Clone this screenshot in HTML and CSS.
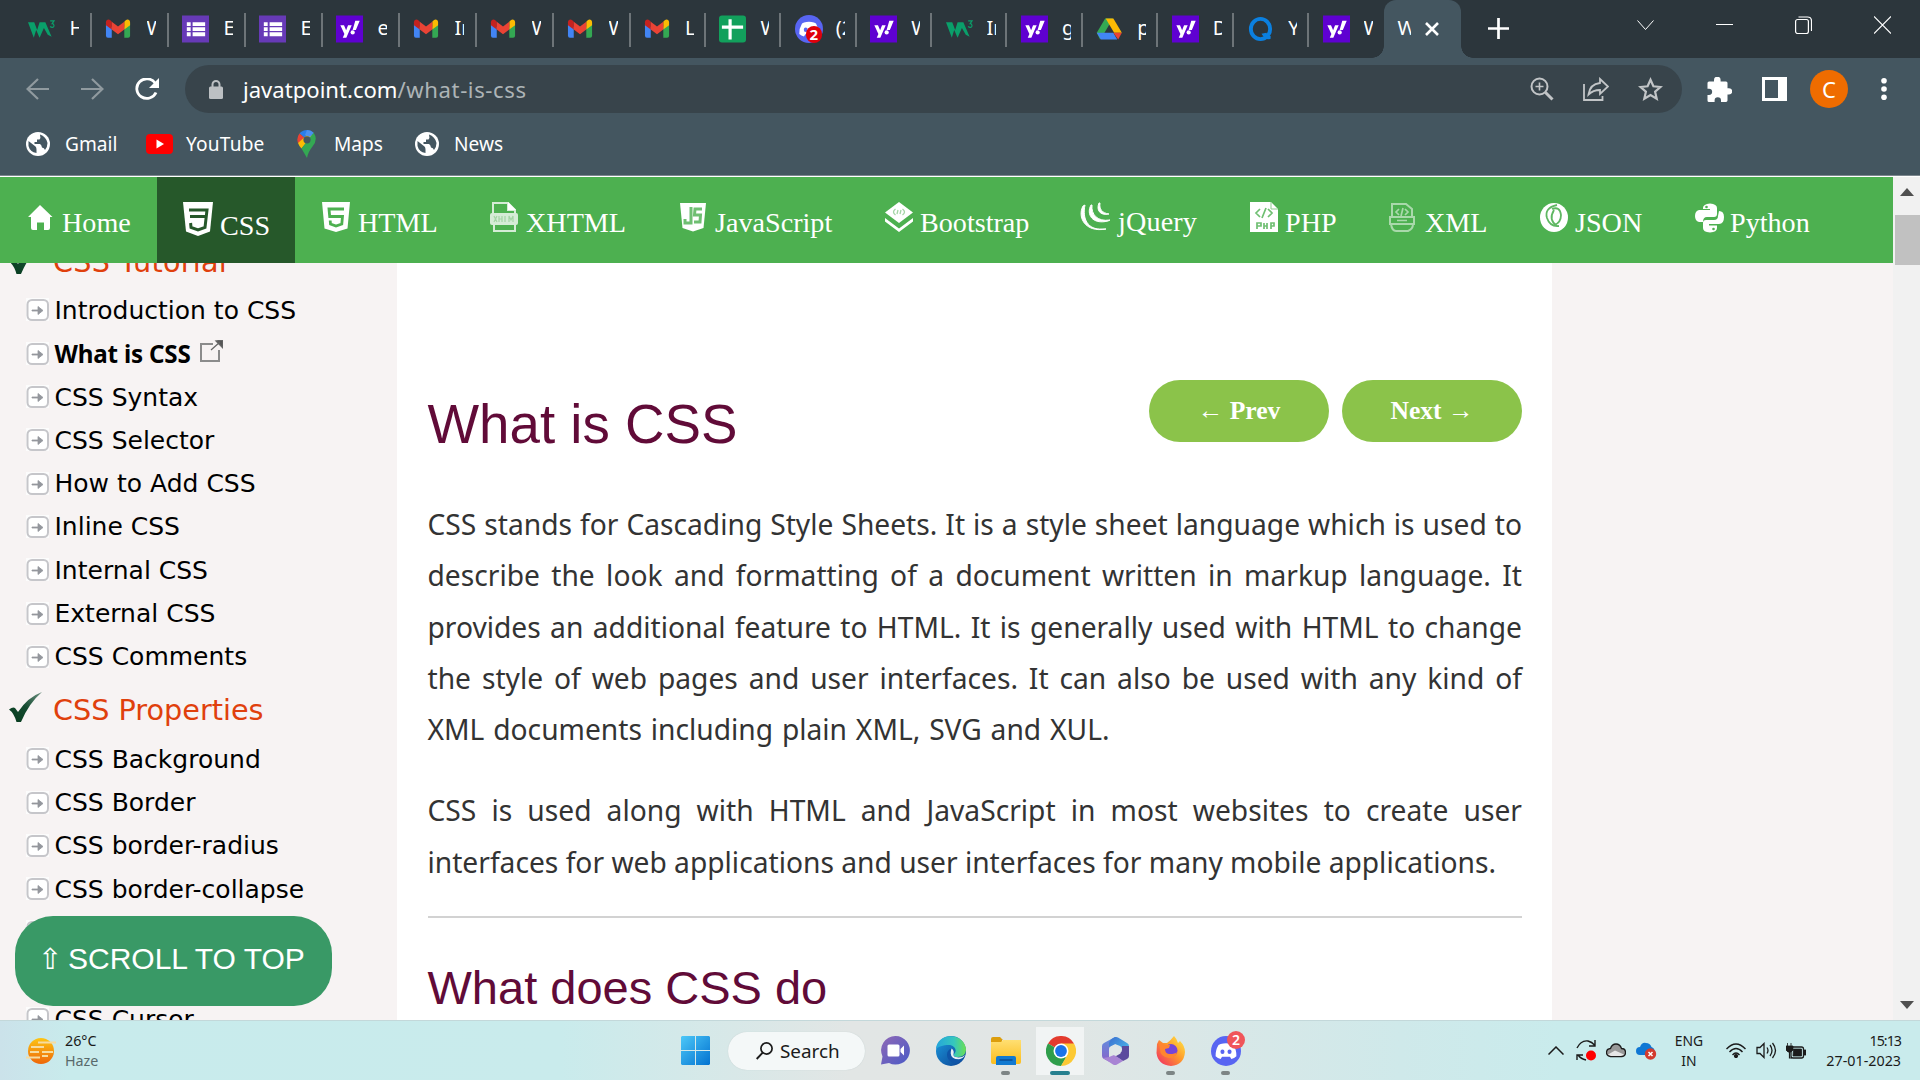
FILE: index.html
```
<!DOCTYPE html>
<html lang="en">
<head>
<meta charset="utf-8">
<title>What is CSS</title>
<link rel="stylesheet" href="styles.css">
</head>
<body>
<svg class="defs" aria-hidden="true">
  <defs>
    <linearGradient id="gWin" x1="0" y1="0" x2="1" y2="1"><stop offset="0" stop-color="#4cc8f8"/><stop offset="1" stop-color="#0272d0"/></linearGradient>
    <linearGradient id="gChat" x1="0" y1="0" x2="1" y2="1"><stop offset="0" stop-color="#9069b6"/><stop offset="1" stop-color="#4a5ac6"/></linearGradient>
    <linearGradient id="gEdgeTop" x1="0" y1="0" x2="1" y2="0"><stop offset="0" stop-color="#25a5dc"/><stop offset=".6" stop-color="#35c7bd"/><stop offset="1" stop-color="#6be052"/></linearGradient>
    <linearGradient id="gEdge" x1="0" y1="0" x2="1" y2="1"><stop offset="0" stop-color="#1c9bde"/><stop offset="1" stop-color="#0b3f92"/></linearGradient>
    <linearGradient id="gFold" x1="0" y1="0" x2="0" y2="1"><stop offset="0" stop-color="#ffdf72"/><stop offset="1" stop-color="#fbbd1d"/></linearGradient>
    <linearGradient id="gSun" x1="0" y1="0" x2="0" y2="1"><stop offset="0" stop-color="#fdc514"/><stop offset="1" stop-color="#ee6609"/></linearGradient>
    <linearGradient id="gFox" x1="1" y1="0" x2="0" y2="1"><stop offset="0" stop-color="#fff04a"/><stop offset=".45" stop-color="#ff9a2b"/><stop offset="1" stop-color="#f0246a"/></linearGradient>
    <linearGradient id="gCheck" x1="1" y1="0" x2="0" y2="1"><stop offset="0" stop-color="#6f9182"/><stop offset=".5" stop-color="#144b30"/><stop offset="1" stop-color="#053a1c"/></linearGradient>
    <linearGradient id="gM1" x1="0" y1="0" x2="0" y2="1"><stop offset="0" stop-color="#5f8fe0"/><stop offset="1" stop-color="#8a63c8"/></linearGradient>
    <linearGradient id="gM2" x1="0" y1="0" x2="1" y2="1"><stop offset="0" stop-color="#3b6fd0"/><stop offset="1" stop-color="#4cc4ef"/></linearGradient>
  </defs>
  <symbol id="w3" viewBox="0 0 28 28"><path d="M0 7h6.500l3 8 2.500-8h6l6.500 15-4-2-4-7-4.500 10-3.500-8-2.500 8z" fill="#0a9f6a"/><path d="M23 5.500h4l-2 3c2.500 0 2.500 3.500.5 3.800-1.200.1-2-.3-2.500-1" fill="none" stroke="#0a9f6a" stroke-width="1.200"/></symbol>
  <symbol id="gmail" viewBox="0 0 28 28"><path d="M1 9v12q0 2 2 2h4V12z" fill="#4285f4"/><path d="M20 12v11h4q2 0 2-2V8z" fill="#34a853"/><path d="M20 6.500v8l6-4.500V7c0-3-3-3.500-4.500-2z" fill="#fbbc04"/><path d="M7 14.500v-8L5.500 5C4 3.500 1 4 1 7v3z" fill="#c5221f"/><path d="M7 6.500l6.500 5 6.500-5v8l-6.500 5-6.500-5z" fill="#ea4335"/></symbol>
  <symbol id="forms" viewBox="0 0 28 28"><path d="M0 0h28v28H0z" fill="#673ab7"/><path d="M5 7h4v4H5zM11 7h13v4H11zM5 12.200h4v4H5zM11 12.200h13v4H11zM5 17.400h4v4H5zM11 17.400h13v4H11z" fill="#fff"/></symbol>
  <symbol id="yahoo" viewBox="0 0 28 28"><path d="M0 0h28v28H0z" fill="#5f01d1"/><path d="M4.500 10H8.300l2.200 5.200L12.500 10h3.800l-5.600 13.200H7l1.700-4z M20 5.500h4.600l-4 9.500h-3.400z" fill="#fff"/><circle cx="17.300" cy="17.500" r="2.200" fill="#fff"/></symbol>
  <symbol id="sheets" viewBox="0 0 28 28"><rect width="28" height="28" rx="3" fill="#12a05c"/><path d="M11.500 4v21M3 12h22" stroke="#fff" stroke-width="3.300"/></symbol>
  <symbol id="face" viewBox="0 0 28 28"><path d="M9 7.500q5-1.500 10 0l2 1q3 5 2.700 10.500-2 1.800-4.700 2.500l-1.300-2.200H10.300L9 21.500q-2.700-.7-4.700-2.500Q4 13.500 7 8.500z" fill="#fff"/><ellipse cx="10.700" cy="14.700" rx="1.900" ry="2.200" fill="#5865f2"/><ellipse cx="17.300" cy="14.700" rx="1.900" ry="2.200" fill="#5865f2"/></symbol>
  <symbol id="drive" viewBox="0 0 28 28"><path d="M9.500 3h8l-9 15.500-4.300 6.500L.8 18z" fill="#34a853"/><path d="M10 3h8l8.800 15h-8z" fill="#fbb904"/><path d="M8.800 18H.8L5 25h17l-4-7z" fill="#4285f4"/><path d="M18 18h8.800L23 25z" fill="#ea4335"/></symbol>
  <symbol id="quora" viewBox="0 0 28 28"><ellipse cx="14" cy="14" rx="10" ry="10.500" fill="none" stroke="#0b80e0" stroke-width="4"/><path d="M15 19l5-1q2 4 4.500 3v3q-5 2-8-3z" fill="#0b80e0"/></symbol>
  <symbol id="globe" viewBox="0 0 24 24"><circle cx="12" cy="12" r="12" fill="#fff"/><path d="M2.500 9l7 5.500q1 .8 1 3v3.500Q4 20 2.500 14zM14 2.500Q20 4.500 21.500 11q0 4-2.500 7-.8-2.500-3-2.500-.5-3-2-3.500H8.500V10H11V7.500h2.500Q15 6 14 2.500z" fill="#445660"/></symbol>
  <symbol id="item" viewBox="0 0 23 23"><path d="M0 0h23v23H0z" fill="#fcfcfc"/><rect x="1.500" y="2" width="20.500" height="20" rx="4.500" fill="#fff" stroke="#c6c6ca" stroke-width="2"/><path d="M6 12h6V8.500l5 4-5 4V13H6z" fill="#94979d" stroke="#94979d" stroke-width=".8"/></symbol>
  <symbol id="check" viewBox="0 0 34 31"><path d="M0 17.500q4-3 6-1.500l3 4Q19 5 33 0 20 11 12 30H7.500Q5 21 0 17.500z" fill="url(#gCheck)"/></symbol>
</svg>

<header class="tabs">
  <div class="tab"><svg class="fav"><use href="#w3"/></svg><span>H</span></div>
  <div class="tab"><svg class="fav"><use href="#gmail"/></svg><span>W</span></div>
  <div class="tab"><svg class="fav"><use href="#forms"/></svg><span>E</span></div>
  <div class="tab"><svg class="fav"><use href="#forms"/></svg><span>E</span></div>
  <div class="tab"><svg class="fav"><use href="#yahoo"/></svg><span>e</span></div>
  <div class="tab"><svg class="fav"><use href="#gmail"/></svg><span>In</span></div>
  <div class="tab"><svg class="fav"><use href="#gmail"/></svg><span>W</span></div>
  <div class="tab"><svg class="fav"><use href="#gmail"/></svg><span>W</span></div>
  <div class="tab"><svg class="fav"><use href="#gmail"/></svg><span>L</span></div>
  <div class="tab"><svg class="fav"><use href="#sheets"/></svg><span>W</span></div>
  <div class="tab"><div class="fav disc"><svg class="disc-bg" viewBox="0 0 28 28"><circle cx="14" cy="14" r="14" fill="#5865f2"/><use href="#face"/></svg><b class="disc-n">2</b></div><span>(2</span></div>
  <div class="tab"><svg class="fav"><use href="#yahoo"/></svg><span>W</span></div>
  <div class="tab"><svg class="fav"><use href="#w3"/></svg><span>In</span></div>
  <div class="tab"><svg class="fav"><use href="#yahoo"/></svg><span>g</span></div>
  <div class="tab"><svg class="fav"><use href="#drive"/></svg><span>p</span></div>
  <div class="tab"><svg class="fav"><use href="#yahoo"/></svg><span>D</span></div>
  <div class="tab"><svg class="fav"><use href="#quora"/></svg><span>Y</span></div>
  <div class="tab last"><svg class="fav"><use href="#yahoo"/></svg><span>W</span></div>
  <div class="tab active"><span>W</span><svg width="14" height="14" viewBox="0 0 14 14"><path d="M1 1l12 12M13 1L1 13" stroke="#fff" stroke-width="2.600"/></svg></div>
  <svg class="plus" width="21" height="21" viewBox="0 0 21 21"><path d="M10.500 0v21M0 10.500h21" stroke="#fff" stroke-width="2.700"/></svg>
  <div class="win">
    <svg width="17" height="18" viewBox="0 0 17 18"><path d="M.5 4.500l8 9 8-9" fill="none" stroke="#fff"/></svg>
    <svg width="17" height="18" viewBox="0 0 17 18"><path d="M0 8.500h17" stroke="#fff" stroke-width="1"/></svg>
    <svg width="17" height="18" viewBox="0 0 17 18"><rect x=".6" y="3.500" width="12.800" height="14" rx="2" fill="none" stroke="#fff" stroke-width="1.200"/><path d="M3.500 1h9q4 0 4 4v10" fill="none" stroke="#fff" stroke-width="1.200"/></svg>
    <svg width="17" height="18" viewBox="0 0 17 18"><path d="M0 .5l17 17M17 .5l-17 17" stroke="#fff" stroke-width="1.200"/></svg>
  </div>
</header>

<div class="toolbar">
  <svg class="back" width="23" height="22" viewBox="0 0 23 22"><path d="M23 11H1.500M12 1L1.500 11 12 21" fill="none" stroke="#909a9f" stroke-width="2.200"/></svg>
  <svg class="fwd" width="23" height="22" viewBox="0 0 23 22"><path d="M0 11h21.500M11 1l10.500 10L11 21" fill="none" stroke="#909a9f" stroke-width="2.200"/></svg>
  <svg class="reload" width="24" height="22" viewBox="0 0 24 22"><path d="M20 5A10 9.800 0 1 0 21 14.500" fill="none" stroke="#fff" stroke-width="2.800"/><path d="M24 0v10h-10z" fill="#fff"/></svg>
  <div class="omni">
    <svg width="14" height="19" viewBox="0 0 14 19"><rect y="6.500" width="14" height="12.500" rx="1.500" fill="#bcc0c3"/><path d="M3.500 7V4.500a3.500 3.500 0 0 1 7 0V7" fill="none" stroke="#bcc0c3" stroke-width="2"/></svg>
    <div class="url"><span class="host">javatpoint.com</span><span class="path">/what-is-css</span></div>
    <div class="omni-icons">
      <svg width="24" height="24" viewBox="0 0 24 24" fill="none" stroke="#c2c5c7" stroke-width="2"><circle cx="9.500" cy="9.500" r="8"/><path d="M5.500 9.500h8M9.500 5.500v8" stroke-width="1.600"/><path d="M15.500 15.500l7 7" stroke-width="3"/></svg>
      <svg width="26" height="24" viewBox="0 0 26 24" fill="none" stroke="#c2c5c7" stroke-width="1.800"><path d="M1 7v16h18.500v-4"/><path d="M17 2l8 7.500-8 7.500v-4q-7 0-11.500 4.500Q7 7 17 6z"/></svg>
      <svg width="25" height="24" viewBox="0 0 25 24"><path d="M12.500 2.800l2.900 6.500 7 .7-5.300 4.700 1.600 7-6.200-3.700-6.200 3.700 1.600-7L2.600 10l7-.7z" fill="none" stroke="#c2c5c7" stroke-width="2.200"/></svg>
    </div>
  </div>
  <div class="ext">
    <svg width="25" height="25" viewBox="0 0 25 25"><path d="M2 4.500h5V3a3.300 3.300 0 0 1 6.600 0v1.500H19a1.500 1.500 0 0 1 1.500 1.500v5.200H22a3.200 3.200 0 0 1 0 6.400h-1.500v6A1.500 1.500 0 0 1 19 25h-5v-1.500a3.200 3.200 0 0 0-6.400 0V25H2a1.500 1.500 0 0 1-1.500-1.500V18H2a3 3 0 0 0 0-6.300H.5V6A1.500 1.500 0 0 1 2 4.500z" fill="#fff"/></svg>
    <svg width="25" height="24" viewBox="0 0 25 24"><path d="M1.500 1.500h22v21h-22z" fill="none" stroke="#fff" stroke-width="3"/><path d="M16 0h9v24h-9z" fill="#fff"/></svg>
    <div class="avatar">C</div>
    <svg width="6" height="22" viewBox="0 0 6 22"><circle cx="3" cy="2.800" r="2.800" fill="#fff"/><circle cx="3" cy="11" r="2.800" fill="#fff"/><circle cx="3" cy="19.200" r="2.800" fill="#fff"/></svg>
  </div>
</div>

<div class="bookmarks">
  <svg width="24" height="24"><use href="#globe"/></svg><span class="bm-gmail">Gmail</span>
  <svg width="27" height="20" viewBox="0 0 27 20"><rect width="27" height="20" rx="4" fill="#f00"/><path d="M10.500 5.500v9l7.500-4.500z" fill="#fff"/></svg><span class="bm-yt">YouTube</span>
  <svg width="20" height="28" viewBox="0 0 20 28"><path d="M10 0a9.600 9.600 0 0 0-7.500 3.500L10 10l6-7.800A9.600 9.600 0 0 0 10 0z" fill="#2a7de9"/><path d="M2.500 3.500A10 10 0 0 0 1 13l9-3z" fill="#ea4335"/><path d="M1 13q1 3 3.500 5.500L16 5l-6 0z" fill="#fbbc04"/><path d="M16.500 2.500L4.500 18.500 10 28q1-6 5.500-11.500 6-7 1-14z" fill="#34a853"/><path d="M10 0q4 0 6.700 2.700L13 7 8 5z" fill="#4b90ee"/><circle cx="10" cy="9.800" r="3.600" fill="#445660"/></svg><span class="bm-maps">Maps</span>
  <svg width="24" height="24"><use href="#globe"/></svg><span class="bm-news">News</span>
</div>

<div class="page">
  <div class="view">
    <nav class="nav">
      <a class="n-home"><svg class="ico" viewBox="0 0 30 34"><path d="M14 3l12.500 12H24v11q0 2-2 2h-4v-7.500h-7V28H7q-2 0-2-2V15H2z" fill="#fff"/></svg>Home</a>
      <a class="n-css"><svg class="ico" viewBox="0 0 30 34"><path d="M0 0h30l-3 29.500L15 34 3 29.500z" fill="#fff"/><path d="M6 8h18l-2 17.500-7 2.500-7-2.500-.4-4.500M7 14.500h15" fill="none" stroke="#26582a" stroke-width="3"/></svg>CSS</a>
      <a><svg class="ico" viewBox="0 0 30 34"><path d="M0 0h28l-2.500 26.500L14 30 2.500 26.500z" fill="#fff"/><path d="M22 7H7l.7 7.500H20.500L19.800 22 14 24l-5.500-2-.3-3.500" fill="none" stroke="#4db050" stroke-width="2.800"/></svg>HTML</a>
      <a class="n-xhtml"><svg class="ico" viewBox="0 0 30 34"><path d="M3 12V1h15l7 7v4M18 1v7h7M4 22v7h21v-7" fill="none" stroke="#d5ecd6" stroke-width="2"/><path d="M18 0v8h8z" fill="#fff"/><rect y="11" width="28" height="12" rx="2" fill="#d5ecd6"/><path d="M4 14l3 6m0-6l-3 6m5-6v6m3-6v6m-3-3h3m3-3v6m4 0v-6l2 4 2-4v6" fill="none" stroke="#a3d5a5" stroke-width="1.200"/></svg>XHTML</a>
      <a><svg class="ico" viewBox="0 0 30 34"><path d="M1 1h26l-2.500 25L14 29.500 3.500 26z" fill="#fff"/><path d="M12 5v16H6v-4m17-10h-7l-.5 6h6l-.5 7h-6" fill="none" stroke="#6fbf72" stroke-width="3"/></svg>JavaScript</a>
      <a class="n-bs"><svg class="ico" viewBox="0 0 30 34"><path d="M15 0l14 10.500L15 21 1 10.500z" fill="#fff"/><path d="M1 16l14 10.500L29 16v3.500L15 30 1 19.500z" fill="#fff"/><path d="M11.500 7q-4 3 0 6m7-6q4 3 0 6m-4.500-5l-1 4m4-4l-1 4" fill="none" stroke="#a3d5a5" stroke-width="1.300"/></svg>Bootstrap</a>
      <a class="n-jq"><svg class="ico" viewBox="0 0 30 34"><path d="M3 4C-3 15 5 31 26 27l-4 0C8 28 2 17 5 3zM11 3C6 12 12 23 28 19l2-1C17 20 11 12 12 3zM19 1C16 8 20 14 29 12 22 11 19 7 20 1z" fill="#fff" stroke="#fff"/></svg>jQuery</a>
      <a class="n-php"><svg class="ico" viewBox="0 0 30 34"><path d="M0 0h21l7 7v23H0z" fill="#fff"/><path d="M21 0v7h7" fill="none" stroke="#8bcb8d"/><path d="M10 7l-4 4 4 4m8-8l4 4-4 4m-2-9l-4 10M7 27v-6h4v3H7m7-3v6m0-3h3m0-3v6m4 0v-6h3v3h-3" fill="none" stroke="#6fbf72" stroke-width="1.700"/></svg>PHP</a>
      <a class="n-xml"><svg class="ico" viewBox="0 0 30 34"><path d="M3 15V2h14l6 5v8M2 22q1 7 5 7h12q5-2 5-7" fill="none" stroke="#a9d9ab" stroke-width="2"/><rect x="1" y="15" width="24" height="7" fill="none" stroke="#a9d9ab" stroke-width="2"/><path d="M10 7l-3 3 3 3m6-6l3 3-3 3m-2-7l-2 8M8 18.500h10" fill="none" stroke="#a9d9ab" stroke-width="1.700"/></svg>XML</a>
      <a class="n-json"><svg class="ico" viewBox="0 0 30 34"><ellipse cx="14" cy="15.500" rx="14" ry="14.500" fill="#fff"/><path d="M17 3q-13 3-10 13 3 9 12 8M14 8q-6 10 3 16M12 7q8-3 9 6 0 8-7 10" fill="none" stroke="#5fb762" stroke-width="1.800"/></svg>JSON</a>
      <a class="n-py"><svg class="ico" viewBox="0 0 30 34"><path d="M8 6q0-4 7-4.500 7 .5 7 4.500v6q0 3-3 3h-7q-4 0-4 5h-4q-4-1-4-6t4-6h11V7H8zM24 9q5 0 5 6 0 7-5 7H14v1.500h8V26q0 4-7 4.500-7-.5-7-4.500v-5q0-3 3-3h8q4 0 4-4z" fill="#fff"/><circle cx="11.500" cy="5" r="1.300" fill="#4db050"/><circle cx="18.500" cy="27" r="1.300" fill="#4db050"/></svg>Python</a>
    </nav>
    <div class="cols">
      <aside class="side">
        <h3 class="first"><svg class="chk"><use href="#check"/></svg>CSS Tutorial</h3>
        <ul>
          <li><svg class="li"><use href="#item"/></svg>Introduction to CSS</li>
          <li class="cur"><svg class="li"><use href="#item"/></svg>What is CSS<svg class="extl" width="23" height="22" viewBox="0 0 23 22"><path d="M1 4h12M1 3v18h18V10" fill="none" stroke="#8b8b8b" stroke-width="2"/><path d="M11 10l9-8M23 0v8l-7-7z" stroke="#666" fill="#555" stroke-width="1.300"/></svg></li>
          <li><svg class="li"><use href="#item"/></svg>CSS Syntax</li>
          <li><svg class="li"><use href="#item"/></svg>CSS Selector</li>
          <li><svg class="li"><use href="#item"/></svg>How to Add CSS</li>
          <li><svg class="li"><use href="#item"/></svg>Inline CSS</li>
          <li><svg class="li"><use href="#item"/></svg>Internal CSS</li>
          <li><svg class="li"><use href="#item"/></svg>External CSS</li>
          <li><svg class="li"><use href="#item"/></svg>CSS Comments</li>
        </ul>
        <h3><svg class="chk"><use href="#check"/></svg>CSS Properties</h3>
        <ul>
          <li><svg class="li"><use href="#item"/></svg>CSS Background</li>
          <li><svg class="li"><use href="#item"/></svg>CSS Border</li>
          <li><svg class="li"><use href="#item"/></svg>CSS border-radius</li>
          <li><svg class="li"><use href="#item"/></svg>CSS border-collapse</li>
          <li><svg class="li"><use href="#item"/></svg></li>
          <li></li>
          <li><svg class="li"><use href="#item"/></svg>CSS Cursor</li>
        </ul>
        <button class="totop"><span class="arr">⇧</span>SCROLL TO TOP</button>
      </aside>
      <main class="main">
        <div class="head">
          <h1>What is CSS</h1>
          <a class="btn"><span>←</span> Prev</a><a class="btn">Next <span>→</span></a>
        </div>
        <p>CSS stands for Cascading Style Sheets. It is a style sheet language which is used to<br>describe the look and formatting of a document written in markup language. It<br>provides an additional feature to HTML. It is generally used with HTML to change<br>the style of web pages and user interfaces. It can also be used with any kind of<br><span class="end1">XML documents including plain XML, SVG and XUL.</span></p>
        <p>CSS is used along with HTML and JavaScript in most websites to create user<br><span class="end2">interfaces for web applications and user interfaces for many mobile applications.</span></p>
        <hr>
        <h2>What does CSS do</h2>
      </main>
    </div>
  </div>
  <div class="scroll">
    <svg width="14" height="8" viewBox="0 0 14 8"><path d="M7 0l7 8H0z" fill="#505050"/></svg>
    <div class="thumb"></div>
    <svg class="down" width="14" height="8" viewBox="0 0 14 8"><path d="M7 8l7-8H0z" fill="#505050"/></svg>
  </div>
</div>

<footer class="task">
  <div class="weather">
    <svg width="30" height="28" viewBox="0 0 30 28"><circle cx="15" cy="14" r="13" fill="url(#gSun)"/><path d="M12 5.500h18M5 10h13M0 20.500h14M4 15h9M16 15h11M16 19h6" stroke="#f6dca0" stroke-width="1.800"/></svg>
    <div class="two"><span>26°C</span><span class="haze">Haze</span></div>
  </div>
  <svg class="start" width="29" height="29" viewBox="0 0 29 29"><path d="M1 0h13v14H0V1zM15 0h13l1 1v13H15zM0 15h14v14H1l-1-1zM15 15h14v13l-1 1H15z" fill="url(#gWin)"/></svg>
  <div class="search"><svg width="17" height="18" viewBox="0 0 17 18"><circle cx="10.500" cy="6.500" r="5.600" fill="none" stroke="#1b1b1b" stroke-width="1.700"/><path d="M6.700 10.700L.7 17" stroke="#1b1b1b" stroke-width="1.900"/></svg>Search</div>
  <div class="apps">
    <div class="app"><svg width="29" height="29" viewBox="0 0 29 29"><path d="M14.500 0A14.300 14.300 0 1 1 8 27l-8 1.500 1.500-8A14.300 14.300 0 0 1 14.500 0z" fill="url(#gChat)"/><rect x="6.500" y="8.500" width="12" height="12" rx="1.500" fill="#fff"/><path d="M19.500 13l3.500-3.500v10L19.500 16z" fill="#fff"/></svg></div>
    <div class="app"><svg width="30" height="30" viewBox="0 0 30 30"><circle cx="15" cy="15" r="15" fill="url(#gEdge)"/><path d="M0 13C1-4 28-4 30 13c0 5-3 8-8 8-3 0-5-1-4-3 4-4 0-9-5-9-6 0-11 2-13 4z" fill="url(#gEdgeTop)"/><path d="M12 15c-3 5 1 13 9 12 4-1 6-3 7-5-8 3-13 0-12-6 1-2 1-3 1-3q-3-1-5 2z" fill="#0f55a8"/><path d="M15.500 12.500q3 2 2 5.500-1 3 5 3.500 4 0 6.500-2.500-2 4-6 4.200-8 0-8.300-6 0-2 .8-4.700z" fill="#e6f0f2"/></svg></div>
    <div class="app run"><svg width="30" height="28" viewBox="0 0 30 28"><path d="M0 2q0-2 2-2h7l3 3h-1v4H0z" fill="#dc9e0d"/><path d="M0 5h10l2-2h18v22q0 2-2 2H2q-2 0-2-2z" fill="url(#gFold)"/><path d="M5 21q0-2 2-2h16q2 0 2 2v7H5z" fill="#1179d0"/><path d="M8.500 23h13" stroke="#0a4d94" stroke-width="1.500"/></svg></div>
    <div class="app chrome"><svg width="30" height="30" viewBox="0 0 30 30"><path d="M15 15L2 7.500A15 15 0 0 1 28 7.500z" fill="#e33b2e"/><path d="M15 15L2 7.500A15 15 0 0 0 15 30l5-8z" fill="#2f9e4b"/><path d="M15 7.500h13A15 15 0 0 1 15 30l6.500-11.500z" fill="#fcc934"/><circle cx="15" cy="15" r="7.500" fill="#fff"/><circle cx="15" cy="15" r="5.900" fill="#1a73e8"/></svg></div>
    <div class="app"><svg width="27" height="28" viewBox="0 0 27 28"><path d="M13 0L2 6Q0 7 0 9v10q0 2 2 3l6 3q-1-2-1-5V12q0-2 2-3l10-5-4-3.500q-1-.8-2-.5z" fill="url(#gM1)"/><path d="M13 0q2 0 3 .5L25 6q2 1 2 3v10l-7-3v-4q0-2-2-3l-5-2-6 3V6q1-4 6-6z" fill="url(#gM2)"/><path d="M27 9v10q0 2-2 3l-4 2-8-5 5-3q2-1 2-3V9z" fill="#5b4a9e"/><path d="M1 21l6-1 5-2 5 3 4 3-6 3.500q-2 1-4 0z" fill="#a884d4"/><path d="M9.500 11.500l4.500-2.500 4.500 2.500v5L14 19l-4.500-2.500z" fill="#e0e7e7"/></svg></div>
    <div class="app run"><svg width="29" height="30" viewBox="0 0 29 30"><path d="M1 8l2-4 4 3 4 0Q15 4 18 0q3 3 4 7l2-2q5 5 5 11-1 13-14 14Q2 29 .5 17z" fill="url(#gFox)"/><circle cx="15" cy="14.500" r="6.500" fill="#7645d8"/><path d="M3 6l6 3h5l-1 3-4 1q0 5 5 5 5 0 7-2-1 6-8 6-9-1-9-9z" fill="#ff8530"/></svg></div>
    <div class="app run"><svg width="30" height="30" viewBox="0 0 28 28"><circle cx="14" cy="14" r="14" fill="#5865f2"/><use href="#face"/></svg><b class="badge">2</b></div>
  </div>
  <div class="tray">
    <svg class="t-chev" width="16" height="9" viewBox="0 0 16 9"><path d="M.5 8.500L8 1l7.500 7.500" fill="none" stroke="#1b1b1b" stroke-width="1.500"/></svg>
    <svg class="t-sync" width="21" height="21" viewBox="0 0 21 21"><path d="M1 8Q5 0 12 1q4 1 6.500 4M19 0v6h-6M1 20v-5h6M2 15q3 4 8 5" fill="none" stroke="#1b1b1b" stroke-width="1.400"/><circle cx="15" cy="15.500" r="5" fill="#f00"/></svg>
    <svg class="t-cloud" width="20" height="15" viewBox="0 0 20 15"><path d="M4.500 13.500q-4-.5-4-4t4-4Q6 1 10 1t5.500 4.500q4 0 4 4t-4 4z" fill="#999" stroke="#1b1b1b" stroke-width="1.300"/><path d="M2 11.500l7-4 9 4-3 1.500H5z" fill="#e6e6e6"/></svg>
    <svg class="t-od" width="21" height="18" viewBox="0 0 21 18"><path d="M4 13q-4 0-4-4t4-4Q6 0 10 1q4 0 5.500 4 3 1 3 4t-3 4z" fill="#0f77d4"/><circle cx="14.500" cy="12" r="5.700" fill="#d23b2e"/><path d="M12.500 10l4 4m0-4l-4 4" stroke="#fff" stroke-width="1.500"/></svg>
    <div class="two lang"><span>ENG</span><span>IN</span></div>
    <svg class="t-wifi" width="20" height="15" viewBox="0 0 20 15" fill="none" stroke="#1b1b1b" stroke-width="1.400"><path d="M.5 6q9.500-10 19 0M3.500 9q6.500-7 13 0M6.500 12q3.500-4 7 0"/><circle cx="10" cy="13" r="1.400" fill="#1b1b1b"/></svg>
    <svg class="t-vol" width="21" height="17" viewBox="0 0 21 17" fill="none" stroke="#1b1b1b" stroke-width="1.300"><path d="M1 5.500h3l4-4v14l-4-4H1zM11 5.500q2 3 0 6M14 3q4 5.500 0 11M16.500 1q6 7.500 0 15"/></svg>
    <svg class="t-bat" width="20" height="16" viewBox="0 0 20 16"><rect x="5" y="4" width="12.500" height="11" rx="2" fill="none" stroke="#1b1b1b" stroke-width="1.300"/><path d="M7.500 6h8v7H7zM18 7h2v5h-2zM0 3h7v4L5 9H2L0 7zM1.500 0v4m3.500-4v4" fill="#1b1b1b" stroke="#1b1b1b" stroke-width=".8"/><path d="M3.500 8v7H6" fill="none" stroke="#1b1b1b" stroke-width="1.200"/></svg>
    <div class="two clock"><span class="time">15:13</span><span>27-01-2023</span></div>
  </div>
</footer>
</body>
</html>
```
FILE: styles.css
```
* { box-sizing: border-box; }
body { margin: 0; width: 1920px; height: 1080px; overflow: hidden; display: flex; flex-direction: column; font-family: "Noto Sans", "Open Sans", sans-serif; background: #fff; }
svg { display: block; flex: none; }
.defs { position: absolute; width: 0; height: 0; }
h1, h2, h3, p, ul { margin: 0; padding: 0; font-weight: normal; }

/* tab strip */
.tabs { height: 58px; flex: none; display: flex; background: #2c363c; padding-left: 14.500px; color: #fff; }
.tab { width: 75.400px; height: 58px; flex: none; display: flex; align-items: center; padding-left: 13.500px; background: linear-gradient(#6d7478, #6d7478) right 13px / 2px 34px no-repeat; }
.tab:nth-child(-n+8) { width: 77px; padding-left: 13px; }
.tab.last { background: none; }
.fav { width: 27px; height: 28px; }
.tab span { width: 9px; margin-left: 14px; overflow: hidden; white-space: nowrap; font-size: 20px; line-height: 56px; height: 58px; }
.tab:nth-child(-n+8) span { margin-left: 15px; }
.disc { position: relative; flex: none; }
.disc-bg { width: 28px; height: 28px; }
.disc-n { position: absolute; left: 11px; top: 11px; width: 16px; height: 17px; border-radius: 8px; background: #e0000b; font-size: 15px; line-height: 17px; text-align: center; }
.tab.active { position: relative; width: 77px; background: #445660; border-radius: 12px 12px 0 0; padding-left: 13px; }
.tab.active span { width: 14px; margin: 0 14px 0 0; }
.tab.active::before, .tab.active::after { content: ""; position: absolute; bottom: 0; width: 12px; height: 12px; }
.tab.active::before { left: -12px; background: radial-gradient(circle at 0 0, #2c363c 11.500px, #445660 12px); }
.tab.active::after { right: -12px; background: radial-gradient(circle at 100% 0, #2c363c 11.500px, #445660 12px); }
.plus { margin: 18px 0 0 26.500px; }
.win { display: flex; gap: 62px; margin: 16px 29px 0 auto; }

/* toolbar */
.toolbar { height: 62px; flex: none; display: flex; align-items: center; background: #445660; padding-left: 26px; }
.fwd { margin-left: 32px; }
.reload { margin-left: 31px; }
.omni { width: 1497px; height: 48px; margin-left: 26px; border-radius: 24px; background: #38444b; display: flex; align-items: center; padding: 0 19px 0 24px; }
.url { margin-left: 20px; font-size: 22.100px; white-space: nowrap; color: #fff; }
.path { color: #adb4b7; letter-spacing: .6px; }
.omni-icons { margin-left: auto; display: flex; gap: 29px; }
.ext { display: flex; align-items: center; margin-left: 25px; gap: 23px; }
.ext svg:nth-child(2) { margin-left: 7px; }
.ext svg:last-child { margin-left: 10px; }
.avatar { width: 38px; height: 38px; border-radius: 50%; background: #ef6c00; color: #fff; font-size: 22px; line-height: 38px; text-align: center; }

/* bookmarks */
.bookmarks { height: 56px; flex: none; display: flex; align-items: flex-start; background: #445660; border-bottom: 1px solid #7c878e; padding-left: 26px; color: #fff; font-size: 19.100px; line-height: 48px; }
.bookmarks svg { align-self: center; margin-bottom: 7px; }
.bookmarks span { margin-left: 15px; }
.bm-gmail { width: 81px; }
.bookmarks .bm-yt { margin-left: 13px; width: 111px; letter-spacing: .2px; }
.bookmarks .bm-maps { margin-left: 17px; width: 81px; }
.bookmarks .bm-news { margin-left: 15px; }

/* page */
.page { height: 844px; flex: none; display: flex; border-top: 1px solid #fff; }
.view { width: 1893px; display: flex; flex-direction: column; }
.nav { height: 86px; flex: none; display: grid; grid-template-columns: 157px 138px 169px 188px 206px 198px 166px 140px 151px 155px 225px; background: #4db050; color: #fff; font: 28.150px/92px "Liberation Serif", serif; }
.nav a { display: flex; height: 86px; padding-left: 27px; overflow: hidden; white-space: nowrap; }
.ico { width: 30px; height: 34px; margin: 25px 6px 0 0; }
.nav .n-home { padding-left: 26px; }
.nav .n-css { background: #26582a; line-height: 98px; padding-left: 26px; }
.n-css .ico { margin-right: 7px; }
.n-xhtml .ico { margin-right: 5px; }
.nav .n-xhtml, .nav .n-bs { padding-left: 26px; }
.n-xhtml .ico { margin-right: 6px; }
.nav .n-jq { padding-left: 24px; line-height: 89px; letter-spacing: .15px; }
.n-jq .ico { margin-right: 8px; }
.nav .n-php { padding-left: 28px; }
.n-php .ico, .n-json .ico, .n-py .ico { margin-right: 5px; }
.nav .n-xml { padding-left: 27px; }
.cols { flex: 1; min-height: 0; display: flex; background: #f7f3f3; }
.side { position: relative; width: 397px; overflow: hidden; font-family: "DejaVu Sans", sans-serif; }
.side h3 { height: 59.200px; padding: 4px 0 0 9px; display: flex; align-items: center; font-size: 28.700px; color: #e0400c; white-space: nowrap; }
.side h3.first { margin-top: -33.400px; padding-top: 6px; letter-spacing: .25px; }
.chk { width: 34px; height: 31px; margin: 0 10px 6px 0; }
.side ul { list-style: none; }
.side li { height: 43.300px; display: flex; align-items: center; padding-left: 26px; font-size: 25px; color: #000; white-space: nowrap; }
.li { width: 23px; height: 23px; margin: 0 5.500px 1px 0; }
.side .cur { font: bold 24.200px/40px "Noto Sans", sans-serif; letter-spacing: -.2px; }
.extl { margin: -5px 0 0 9px; }
.totop { position: absolute; left: 15px; top: 653px; width: 317px; height: 90px; border: 0; border-radius: 38px; background: #399966; color: #fff; font: 30px/86px "Liberation Sans", sans-serif; padding: 0 0 0 23px; display: flex; white-space: nowrap; }
.arr { width: 30px; font-family: "DejaVu Sans", sans-serif; font-size: 29px; line-height: 86px; text-align: left; }
.main { width: 1155px; background: #fff; padding: 117px 30px 0 30.500px; overflow: hidden; color: #333; }
.head { display: flex; height: 119px; gap: 13px; }
.head h1 { flex: 1; margin-top: 13px; font: 54.700px/62px "Liberation Sans", sans-serif; color: #610b38; }
.btn { width: 180px; height: 62px; border-radius: 31px; background: #8bc34a; color: #fff; text-align: center; font: bold 25.600px/61px "Liberation Serif", serif; }
.btn span { font-weight: normal; }
.main p { font-size: 28.200px; line-height: 51.350px; white-space: nowrap; text-align: justify; text-align-last: justify; margin-bottom: 29.500px; }
.main p span { display: inline-block; vertical-align: top; }
.end1 { width: 682px; }
.end2 { width: 1066px; }
.main hr { border: 0; height: 2px; background: #d2d2d2; margin: -1px 0 0; }
.main h2 { margin-top: 39.500px; font: 47px/60px "Liberation Sans", sans-serif; color: #610b38; }
.scroll { width: 27px; background: #f1f1f1; display: flex; flex-direction: column; align-items: center; padding: 11px 0; }
.thumb { width: 25px; height: 50px; margin: 19px 0 0 2px; background: #c1c1c1; }
.down { margin-top: auto; }

/* taskbar */
.task { height: 60px; flex: none; display: flex; align-items: center; border-top: 1px solid #c3d8da; background: linear-gradient(90deg, #cbe2ea 0, #c8ebec 70px, #c9ebec 560px, #e2e6e5 850px, #e1e6e5 1060px, #cfe9ea 1400px, #c9ebec 1560px, #c9ebec); color: #1b1b1b; }
.weather { width: 681px; display: flex; align-items: center; padding-left: 26px; gap: 9px; }
.two { display: flex; flex-direction: column; font-size: 14.300px; line-height: 20px; }
.haze { color: #58696b; }
.search { width: 137px; height: 38px; margin-left: 18px; border-radius: 19px; background: #f4f8f8; box-shadow: 0 0 1px #b8c6c6; display: flex; align-items: center; padding-left: 28px; gap: 7px; font-size: 18.900px; }
.apps { display: flex; margin-left: 3px; }
.app { position: relative; width: 55px; height: 58px; display: flex; align-items: center; justify-content: center; }
.app.run::after { content: ""; position: absolute; left: 23px; bottom: 5px; width: 9px; height: 4px; border-radius: 2px; background: #7d8585; }
.app.chrome { background: linear-gradient(#f1f4f4, #f1f4f4) 3px 5px / 48px 48px no-repeat; }
.app.chrome::after { content: ""; position: absolute; left: 17px; bottom: 5px; width: 20px; height: 4px; border-radius: 2px; background: #26808f; }
.badge { position: absolute; left: 29px; top: 9px; width: 18px; height: 18px; border-radius: 50%; background: #f0555a; color: #fff; font-weight: 600; font-size: 14px; line-height: 18px; text-align: center; }
.tray { display: flex; align-items: center; margin-left: auto; padding-right: 19px; }
.t-sync { margin-left: 12px; }
.t-cloud { margin-left: 9px; }
.t-od { margin: 1px 0 0 10px; }
.lang { width: 32px; align-items: center; margin: 0 21px 0 16px; font-size: 13.900px; }
.t-vol { margin-left: 10px; }
.t-bat { margin-left: 9px; }
.clock { width: 76px; align-items: flex-end; margin-left: 19px; }
.time { letter-spacing: -1px; }
```
